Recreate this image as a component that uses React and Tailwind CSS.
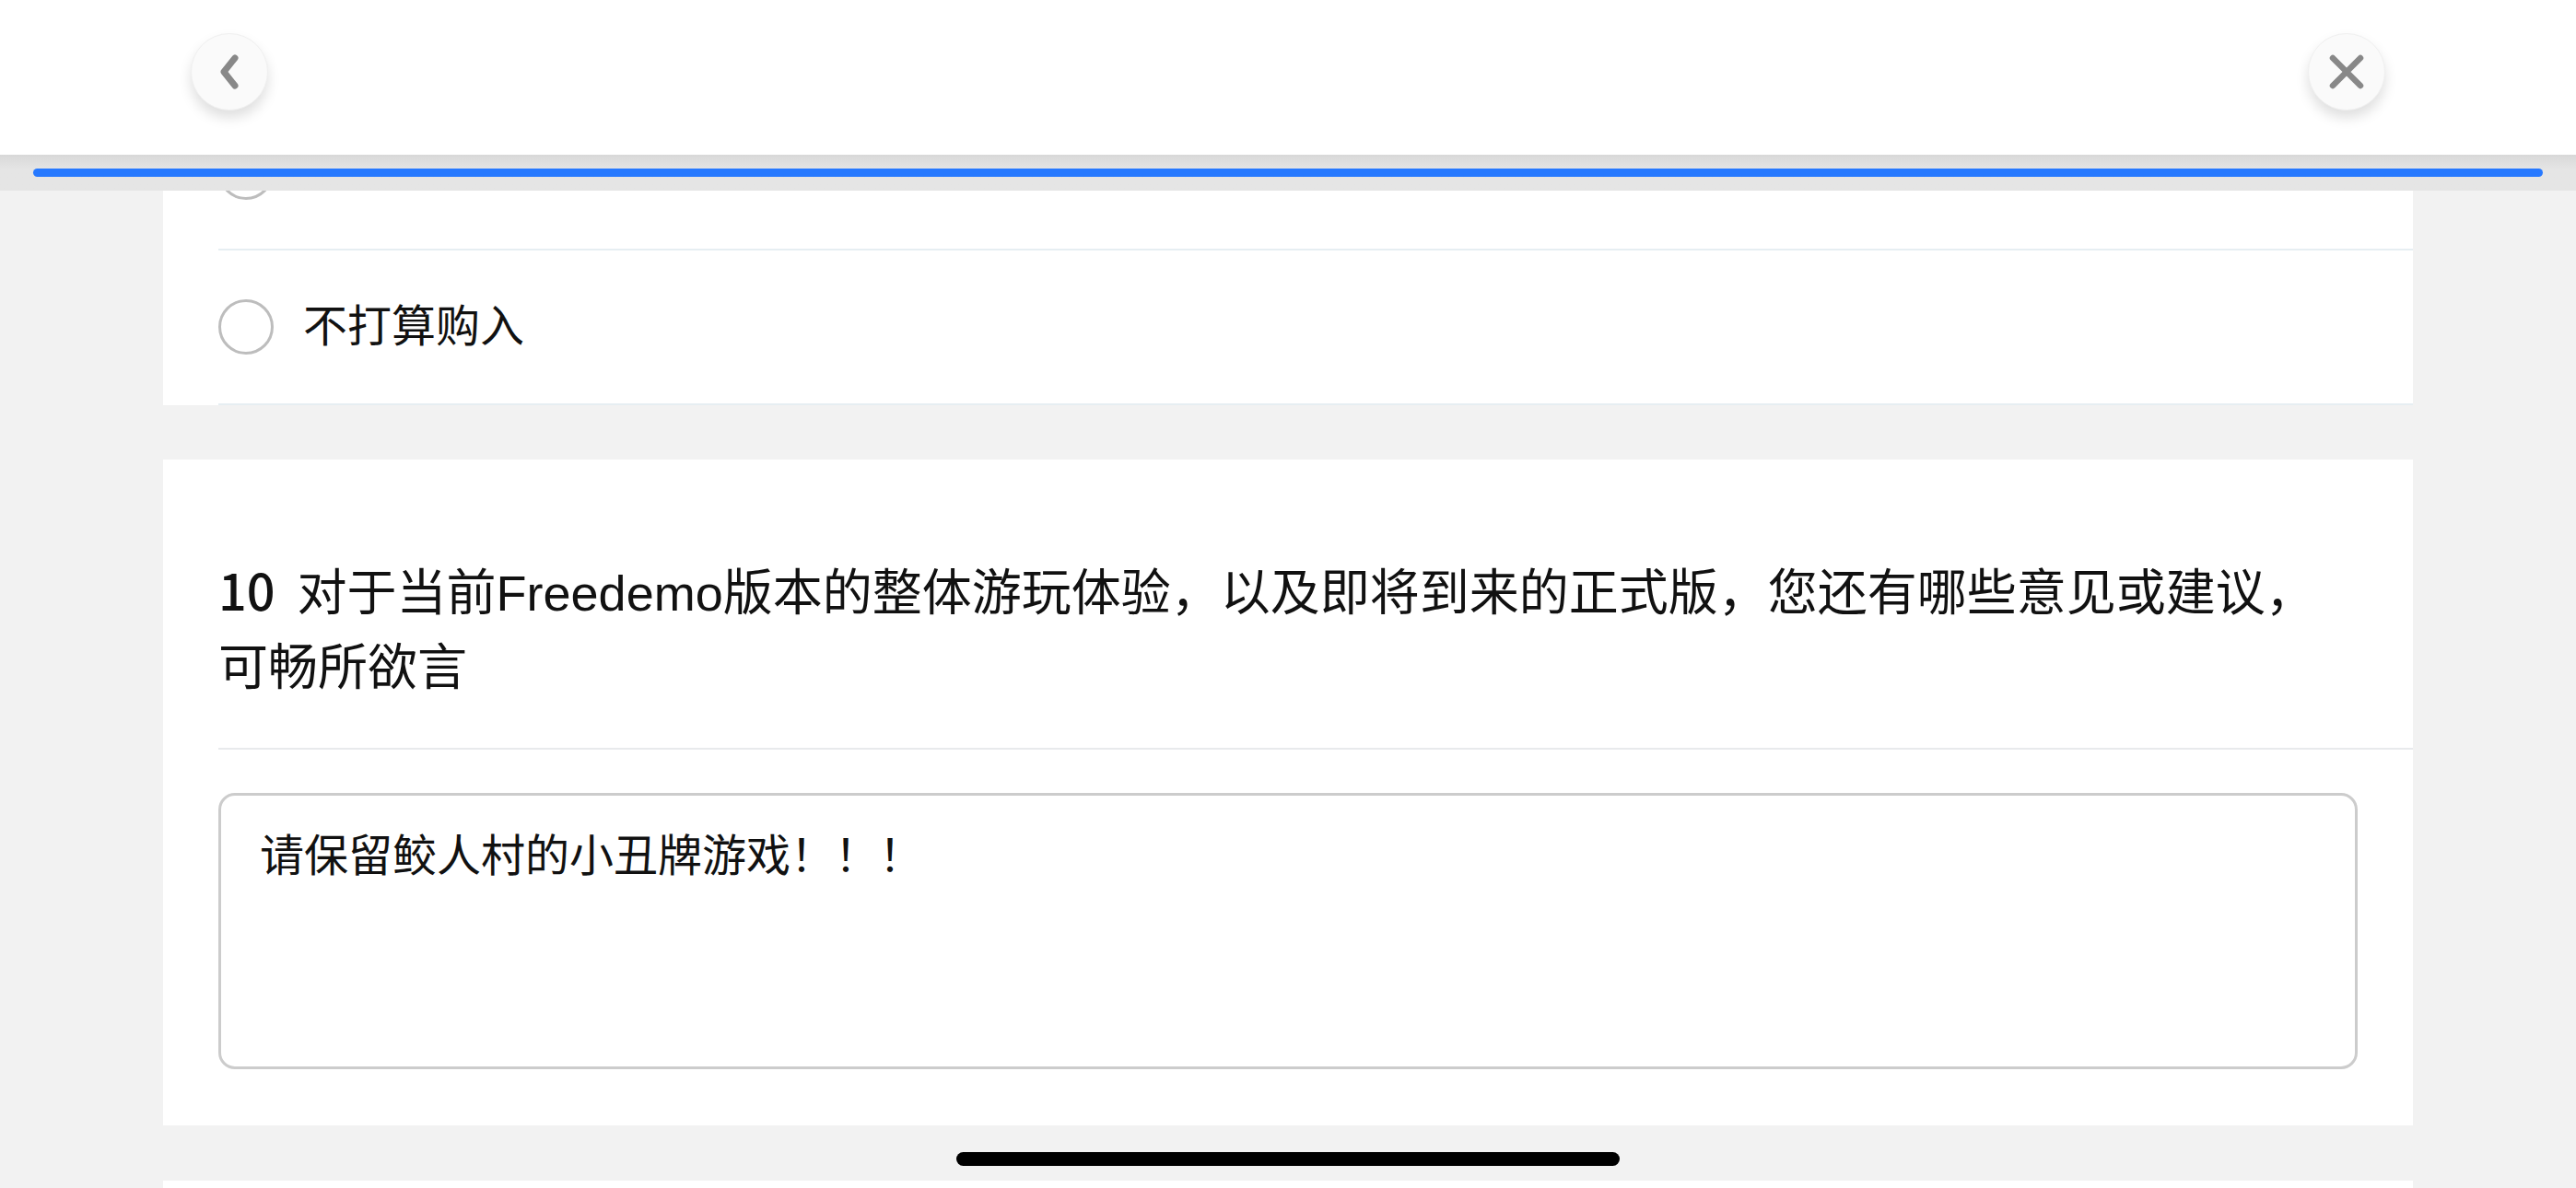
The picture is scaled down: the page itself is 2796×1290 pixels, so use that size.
import React from "react";

const FONT = { fontFamily: '"Liberation Sans", "Noto Sans CJK SC", sans-serif' };

function Radio() {
  return <div className="w-[60px] h-[60px] rounded-full border-[3px] border-[#bdbdbd] bg-white shrink-0" />;
}

function OptionRow({ label }) {
  return (
    <div className="ml-[60px] h-[168px] flex items-center border-b-2 border-[#e6eef2]">
      <Radio />
      {label ? <span className="ml-[32px] text-[48px] leading-[72px] text-[#111]">{label}</span> : null}
    </div>
  );
}

function RoundButton({ children }) {
  return (
    <div className="w-[84px] h-[84px] rounded-full bg-[#fafafa] border border-[#f0f0f0] shadow-[0_8px_14px_rgba(0,0,0,0.13)] flex items-center justify-center">
      {children}
    </div>
  );
}

export default function App() {
  return (
    <div className="relative w-[2796px] h-[1290px] overflow-hidden bg-[#f2f2f2]" style={FONT}>
      {/* scrolled content */}
      <div className="flex flex-col">
        <div className="mx-[177px] bg-white pt-[104px]">
          <OptionRow label="" />
          <OptionRow label="不打算购入" />
        </div>

        <div className="mx-[177px] mt-[59px] bg-white pt-[105px] pb-[61px]">
          <div className="ml-[60px] pr-[60px] pb-[46px] border-b-2 border-[#e8eaec]">
            <p className="text-[54px] leading-[81px] text-[#111]">
              <span className="font-medium leading-[40px] mr-[9px] font-['Noto_Sans_CJK_SC',sans-serif]">10</span> 对于当前Freedemo版本的整体游玩体验，以及即将到来的正式版，您还有哪些意见或建议，
              <br />
              可畅所欲言
            </p>
          </div>
          <div className="mt-[47px] mx-[60px]">
            <textarea
              readOnly
              defaultValue="请保留鲛人村的小丑牌游戏！！！"
              className="block w-full h-[300px] resize-none border-[3px] border-[#cccccc] rounded-[18px] bg-white px-[42px] pt-[30px] text-[48px] leading-[72px] text-[#111] outline-none"
              style={FONT}
            />
          </div>
        </div>

        <div className="mx-[177px] mt-[60px] h-[200px] bg-white" />
      </div>

      {/* fixed header */}
      <div className="absolute top-0 left-0 w-full">
        <div className="h-[168px] bg-white flex items-start justify-between px-[207px] pt-[36px]">
          <RoundButton>
            <svg width="40" height="40" viewBox="0 0 40 40" fill="none">
              <path d="M26 5 L14 20 L26 35" stroke="#888888" strokeWidth="7" strokeLinecap="round" strokeLinejoin="round" />
            </svg>
          </RoundButton>
          <RoundButton>
            <svg width="40" height="40" viewBox="0 0 40 40" fill="none">
              <path d="M5 5 L35 35 M35 5 L5 35" stroke="#888888" strokeWidth="6.5" strokeLinecap="round" />
            </svg>
          </RoundButton>
        </div>
        <div className="h-[39px] bg-gradient-to-b from-[#d8d8d8] to-[#e5e5e5] to-[40%] pt-[15px] pl-[36px] pr-[36px]">
          <div className="h-[9px] w-full rounded-full bg-[#2779ff]" />
        </div>
      </div>

      {/* home indicator */}
      <div className="absolute left-[1038px] top-[1251px] w-[720px] h-[15px] rounded-full bg-black" />
    </div>
  );
}
